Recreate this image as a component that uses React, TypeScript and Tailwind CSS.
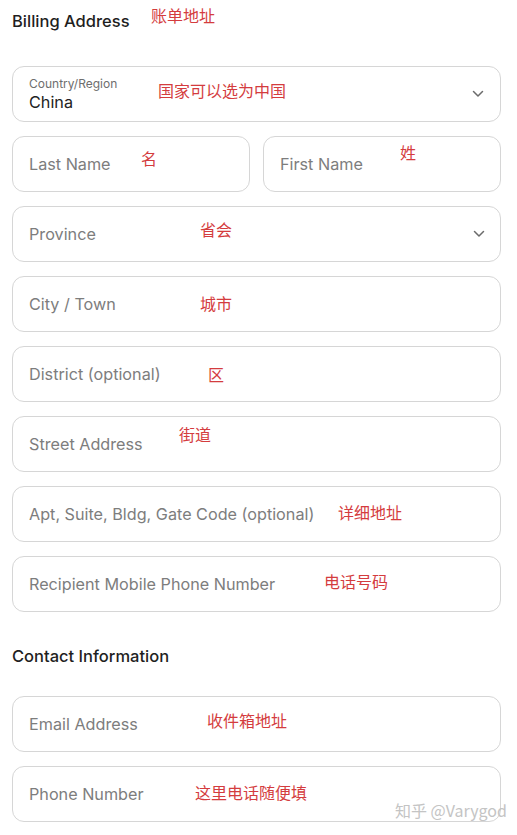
import React from "react";

const font = { fontFamily: "Inter, 'Noto Sans CJK SC', sans-serif" };

interface FieldProps {
  placeholder: string;
  note?: string;
  notePos?: string;
  select?: boolean;
  className?: string;
}

// red hand-written style annotation laid over the screenshot
const Note = ({ text, pos }: { text: string; pos: string }) => (
  <span
    className={`absolute ${pos} text-[16px] leading-5 text-[#d43c3e] pointer-events-none whitespace-nowrap`}
    style={{ fontFamily: "'Noto Sans CJK SC', sans-serif" }}
  >
    {text}
  </span>
);

const Chevron = () => (
  <svg
    className="absolute right-[16px] top-1/2 -translate-y-1/2"
    width="12"
    height="8"
    viewBox="0 0 12 8"
    fill="none"
  >
    <path d="M1.5 1.5L6 6L10.5 1.5" stroke="#6b6b6b" strokeWidth="1.5" strokeLinecap="round" strokeLinejoin="round" />
  </svg>
);

const Field = ({ placeholder, note, notePos, select, className }: FieldProps) => (
  <div className={`relative h-[56px] ${className ?? ""}`}>
    <input
      placeholder={placeholder}
      className="w-full h-full rounded-[12px] border border-[#d6d6d6] bg-white pl-[16px] pr-10 text-[16.2px] text-[#222] placeholder:text-[#7d7d7d] outline-none"
      style={font}
    />
    {select && <Chevron />}
    {note && notePos && <Note text={note} pos={notePos} />}
  </div>
);

export default function App() {
  return (
    <div className="min-h-screen bg-white pl-3 pr-4 pt-[9px] pb-[13px]" style={font}>
      {/* Billing */}
      <div className="relative">
        <h2 className="text-[16.5px] leading-6 font-medium text-[#1f1f1f]">Billing Address</h2>
        <Note text="账单地址" pos="left-[139px] top-[-4px]" />
      </div>

      <div className="mt-[33px] flex flex-col gap-[14px]">
        {/* Country select */}
        <div className="relative h-[56px] rounded-[12px] border border-[#d6d6d6] pl-[16px] flex flex-col justify-center">
          <span className="text-[12px] leading-4 text-[#6e6e6e]">Country/Region</span>
          <span className="text-[16.2px] leading-5 text-[#222]">China</span>
          <Chevron />
          <Note text="国家可以选为中国" pos="left-[145px] top-[13px]" />
        </div>

        <div className="flex gap-[13px]">
          <Field className="flex-1" placeholder="Last Name" note="名" notePos="left-[129px] top-[12px]" />
          <Field className="flex-1" placeholder="First Name" note="姓" notePos="left-[137px] top-[6px]" />
        </div>

        <Field placeholder="Province" select note="省会" notePos="left-[188px] top-[13px]" />
        <Field placeholder="City / Town" note="城市" notePos="left-[188px] top-[17px]" />
        <Field placeholder="District (optional)" note="区" notePos="left-[196px] top-[18px]" />
        <Field placeholder="Street Address" note="街道" notePos="left-[167px] top-[8px]" />
        <Field placeholder="Apt, Suite, Bldg, Gate Code (optional)" note="详细地址" notePos="left-[326px] top-[16px]" />
        <Field placeholder="Recipient Mobile Phone Number" note="电话号码" notePos="left-[312px] top-[15px]" />
      </div>

      {/* Contact */}
      <h2 className="mt-[32px] text-[16.5px] leading-6 font-medium text-[#1f1f1f]">Contact Information</h2>

      <div className="mt-[28px] flex flex-col gap-[14px]">
        <Field placeholder="Email Address" note="收件箱地址" notePos="left-[195px] top-[14px]" />
        <div className="relative">
          <Field placeholder="Phone Number" note="这里电话随便填" notePos="left-[183px] top-[16px]" />
          <span
            className="absolute left-[383px] top-[34px] text-[16px] leading-5 text-[#c4c4c4] whitespace-nowrap"
            style={{ fontFamily: "'Noto Sans CJK SC', sans-serif" }}
          >
            知乎 @Varygod
          </span>
        </div>
      </div>
    </div>
  );
}
